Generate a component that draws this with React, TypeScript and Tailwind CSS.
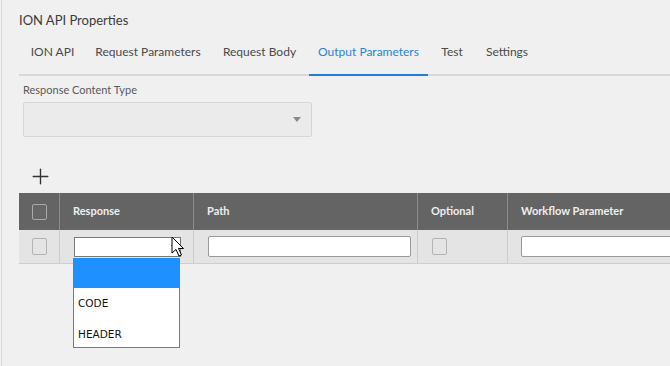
import { Plus } from 'lucide-react'

const tabs = [
  { label: 'ION API', w: 'w-[59px]' },
  { label: 'Request Parameters', w: 'w-[124px]' },
  { label: 'Request Body', w: 'w-[91px]' },
  { label: 'Output Parameters', w: 'w-[119px]' },
  { label: 'Test', w: 'w-[40px]' },
  { label: 'Settings', w: 'w-[62px]' },
]

function Check({ dark }: { dark?: boolean }) {
  return (
    <div
      className={
        dark
          ? 'h-[16px] w-[15px] rounded-[2px] border border-[#a9a9a9] bg-[#666666]'
          : 'h-[17px] w-[15px] rounded-[2px] border border-[#b4b4b4] bg-[#e4e4e4]'
      }
    />
  )
}

function Cursor() {
  return (
    <svg width="16" height="22" viewBox="0 0 16 22" className="absolute left-[171px] top-[236px]">
      <path d="M1 1 L1 17 L5 13.5 L8 20 L10.5 19 L7.5 12.5 L12.5 12.5 Z" fill="#ffffff" stroke="#000000" strokeWidth="1" strokeLinejoin="round" />
    </svg>
  )
}

export default function App() {
  const cols = 'grid grid-cols-[41px_134px_224px_90px_1fr]'
  return (
    <div className="relative h-[366px] w-[670px] overflow-hidden bg-[#f0f0f0] pl-px" style={{ fontFamily: 'Lato, "Liberation Sans", sans-serif' }}>
      <div className="h-full border-l border-[#dcdcdc] pl-[17px]">
        <div className="pt-[12px] text-[13px] leading-[17px] text-[#3b3b3b]">ION API Properties</div>

        <div className="mt-[15px] flex gap-[4px] border-b-2 border-[#d8d8d8] pl-[4px]">
          {tabs.map((t) => (
            <div
              key={t.label}
              className={
                t.label === 'Output Parameters'
                  ? `${t.w} -mb-[2px] whitespace-nowrap border-b-2 border-[#1f7fd6] pb-[14px] text-center text-[12px] leading-[16px] text-[#2a83d6]`
                  : `${t.w} whitespace-nowrap pb-[14px] text-center text-[12px] leading-[16px] text-[#4a4a4a]`
              }
            >
              {t.label}
            </div>
          ))}
        </div>

        <div className="pl-[4px]">
          <div className="mt-[7px] text-[11px] leading-[14px] text-[#5a5a5a]">Response Content Type</div>
          <div className="mt-[5px] flex h-[35px] w-[289px] items-center justify-end rounded-[2px] border border-[#d6d6d6] bg-[#ebebeb] pr-[10px]">
            <div className="h-0 w-0 border-x-[4px] border-t-[5px] border-x-transparent border-t-[#8a8a8a]" />
          </div>
          <div className="mt-[27px] pl-[5px] text-[#333333]">
            <Plus size={25} strokeWidth={1.3} />
          </div>
        </div>

        <div className="mt-[4px] w-[700px]">
          <div className={`${cols} h-[37px] bg-[#646464] text-[11px] font-bold text-[#eeeeee]`}>
            <div className="flex items-center justify-center border-r border-[#8c8c8c]">
              <Check dark />
            </div>
            <div className="flex items-center border-r border-[#8c8c8c] pl-[13px]">Response</div>
            <div className="flex items-center border-r border-[#8c8c8c] pl-[13px]">Path</div>
            <div className="flex items-center border-r border-[#8c8c8c] pl-[13px]">Optional</div>
            <div className="flex items-center pl-[13px]">Workflow Parameter</div>
          </div>
          <div className={`${cols} h-[34px] border-b border-[#cfcfcf] bg-[#e4e4e4]`}>
            <div className="flex items-center justify-center border-r border-[#cccccc]">
              <Check />
            </div>
            <div className="flex items-center border-r border-[#cccccc] pl-[14px]">
              <div className="flex h-[20px] w-[107px] items-center justify-end border border-[#7a7a7a] bg-white pr-[3px]">
                <div className="h-0 w-0 border-x-[3px] border-t-[4px] border-x-transparent border-t-[#333333]" />
              </div>
            </div>
            <div className="flex items-center border-r border-[#cccccc] pl-[14px]">
              <div className="h-[21px] w-[203px] rounded-[2px] border border-[#9a9a9a] bg-white" />
            </div>
            <div className="flex items-center border-r border-[#cccccc] pl-[14px]">
              <Check />
            </div>
            <div className="flex items-center pl-[13px]">
              <div className="h-[21px] w-[200px] rounded-[2px] border border-[#9a9a9a] bg-white" />
            </div>
          </div>
        </div>
      </div>

      <div className="absolute left-[73px] top-[258px] w-[107px] border border-t-0 border-[#7a7a7a] bg-white text-[10.5px] text-[#111111]" style={{ fontFamily: '"DejaVu Sans", Lato, sans-serif' }}>
        <div className="h-[30px] bg-[#1e90ff]" />
        <div className="flex h-[30px] items-center pl-[4px] pt-[2px]">CODE</div>
        <div className="flex h-[29px] items-center pl-[4px] pt-[4px]">HEADER</div>
      </div>
      <Cursor />
    </div>
  )
}
